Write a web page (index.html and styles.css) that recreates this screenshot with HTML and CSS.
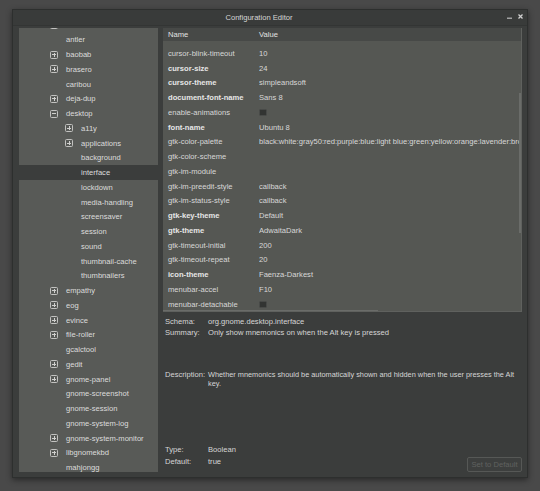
FILE: index.html
```html
<!DOCTYPE html>
<html lang="en">
<head>
    <meta charset="UTF-8">
    <title>Configuration Editor</title>
    <link rel="stylesheet" href="styles.css">
</head>
<body>
    <div class="window">
        <div class="titlebar">
            <span class="title">Configuration Editor</span>
            <div class="wm-buttons">
                <svg class="wm-min" width="5" height="5" viewBox="0 0 5 5"><path d="M0 4.2H5" stroke="#bdbdbd" stroke-width="1.2"/></svg>
                <svg class="wm-close" width="5" height="5" viewBox="0 0 5 5"><path d="M0.5 0.5L4.5 4.5M4.5 0.5L0.5 4.5" stroke="#d0d0d0" stroke-width="1.3"/></svg>
            </div>
        </div>

        <div class="content">
            <!-- arbre des schemas -->
            <div class="tree">
                <ul class="tree-list">
                    <li class="node lvl1 partial"><span class="exp plus"></span><span class="label"></span></li>
                    <li class="node lvl1"><span class="exp none"></span><span class="label">antler</span></li>
                    <li class="node lvl1"><span class="exp plus"></span><span class="label">baobab</span></li>
                    <li class="node lvl1"><span class="exp plus"></span><span class="label">brasero</span></li>
                    <li class="node lvl1"><span class="exp none"></span><span class="label">caribou</span></li>
                    <li class="node lvl1"><span class="exp plus"></span><span class="label">deja-dup</span></li>
                    <li class="node lvl1"><span class="exp minus"></span><span class="label">desktop</span></li>
                    <li class="node lvl2"><span class="exp plus"></span><span class="label">a11y</span></li>
                    <li class="node lvl2"><span class="exp plus"></span><span class="label">applications</span></li>
                    <li class="node lvl2"><span class="exp none"></span><span class="label">background</span></li>
                    <li class="node lvl2 selected"><span class="exp none"></span><span class="label">interface</span></li>
                    <li class="node lvl2"><span class="exp none"></span><span class="label">lockdown</span></li>
                    <li class="node lvl2"><span class="exp none"></span><span class="label">media-handling</span></li>
                    <li class="node lvl2"><span class="exp none"></span><span class="label">screensaver</span></li>
                    <li class="node lvl2"><span class="exp none"></span><span class="label">session</span></li>
                    <li class="node lvl2"><span class="exp none"></span><span class="label">sound</span></li>
                    <li class="node lvl2"><span class="exp none"></span><span class="label">thumbnail-cache</span></li>
                    <li class="node lvl2"><span class="exp none"></span><span class="label">thumbnailers</span></li>
                    <li class="node lvl1"><span class="exp plus"></span><span class="label">empathy</span></li>
                    <li class="node lvl1"><span class="exp plus"></span><span class="label">eog</span></li>
                    <li class="node lvl1"><span class="exp plus"></span><span class="label">evince</span></li>
                    <li class="node lvl1"><span class="exp plus"></span><span class="label">file-roller</span></li>
                    <li class="node lvl1"><span class="exp none"></span><span class="label">gcalctool</span></li>
                    <li class="node lvl1"><span class="exp plus"></span><span class="label">gedit</span></li>
                    <li class="node lvl1"><span class="exp plus"></span><span class="label">gnome-panel</span></li>
                    <li class="node lvl1"><span class="exp none"></span><span class="label">gnome-screenshot</span></li>
                    <li class="node lvl1"><span class="exp none"></span><span class="label">gnome-session</span></li>
                    <li class="node lvl1"><span class="exp none"></span><span class="label">gnome-system-log</span></li>
                    <li class="node lvl1"><span class="exp plus"></span><span class="label">gnome-system-monitor</span></li>
                    <li class="node lvl1"><span class="exp plus"></span><span class="label">libgnomekbd</span></li>
                    <li class="node lvl1"><span class="exp none"></span><span class="label">mahjongg</span></li>
                </ul>
            </div>

            <div class="main">
                <!-- liste des cles -->
                <div class="keys">
                    <div class="keys-head"><span>Name</span><span>Value</span></div>
                    <div class="keys-body">
                        <div class="key"><span class="name">cursor-blink-timeout</span><span class="value">10</span></div>
                        <div class="key set"><span class="name">cursor-size</span><span class="value">24</span></div>
                        <div class="key set"><span class="name">cursor-theme</span><span class="value">simpleandsoft</span></div>
                        <div class="key set"><span class="name">document-font-name</span><span class="value">Sans 8</span></div>
                        <div class="key"><span class="name">enable-animations</span><span class="value"><span class="check"></span></span></div>
                        <div class="key set"><span class="name">font-name</span><span class="value">Ubuntu 8</span></div>
                        <div class="key"><span class="name">gtk-color-palette</span><span class="value">black:white:gray50:red:purple:blue:light blue:green:yellow:orange:lavender:brown:goldenrod4:dodger blue:pink:light green:gray10:gray30:gray75:gray90</span></div>
                        <div class="key"><span class="name">gtk-color-scheme</span><span class="value"></span></div>
                        <div class="key"><span class="name">gtk-im-module</span><span class="value"></span></div>
                        <div class="key"><span class="name">gtk-im-preedit-style</span><span class="value">callback</span></div>
                        <div class="key"><span class="name">gtk-im-status-style</span><span class="value">callback</span></div>
                        <div class="key set"><span class="name">gtk-key-theme</span><span class="value">Default</span></div>
                        <div class="key set"><span class="name">gtk-theme</span><span class="value">AdwaitaDark</span></div>
                        <div class="key"><span class="name">gtk-timeout-initial</span><span class="value">200</span></div>
                        <div class="key"><span class="name">gtk-timeout-repeat</span><span class="value">20</span></div>
                        <div class="key set"><span class="name">icon-theme</span><span class="value">Faenza-Darkest</span></div>
                        <div class="key"><span class="name">menubar-accel</span><span class="value">F10</span></div>
                        <div class="key"><span class="name">menubar-detachable</span><span class="value"><span class="check"></span></span></div>
                    </div>
                    <div class="vscroll"></div>
                    <div class="hscroll"></div>
                </div>

                <!-- details de la cle -->
                <div class="details">
                    <div class="info">
                        <span class="lbl">Schema:</span><span>org.gnome.desktop.interface</span>
                        <span class="lbl">Summary:</span><span>Only show mnemonics on when the Alt key is pressed</span>
                    </div>
                    <div class="info desc">
                        <span class="lbl">Description:</span><span class="desc-text">Whether mnemonics should be automatically shown and hidden when the user presses the Alt key.</span>
                    </div>
                    <div class="bottom">
                        <div class="info type">
                            <span class="lbl">Type:</span><span>Boolean</span>
                            <span class="lbl">Default:</span><span>true</span>
                        </div>
                        <button class="reset" disabled>Set to Default</button>
                    </div>
                </div>
            </div>
        </div>
    </div>
</body>
</html>
```

FILE: styles.css
```css
body {
    margin: 0;
    padding: 9px 12px;
    background: #494949;
    font-family: "Liberation Sans", Arial, sans-serif;
    font-size: 7.6px;
    color: #dcdcdc;
}
.window {
    width: 516px;
    height: 469px;
    box-sizing: border-box;
    border: 1px solid #2d2f2e;
    background: #3b3d3c;
    display: flex;
    flex-direction: column;
    box-shadow: 0 2px 6px rgba(0,0,0,0.45);
}
.titlebar {
    height: 16px;
    box-sizing: border-box;
    display: flex;
    align-items: center;
    background: #393b3a;
    border-bottom: 1px solid #333534;
}
.title {
    flex: 1;
    text-align: center;
    color: #d6d6d6;
}
.wm-buttons {
    width: 22px;
    box-sizing: border-box;
    padding: 0 4px 0 2px;
    display: flex;
    gap: 6px;
    align-items: center;
    margin-bottom: 3px;
}
.wm-buttons svg {
    display: block;
}
.content {
    flex: 1;
    display: flex;
    gap: 5px;
    padding: 2px 5px 5px 6px;
    min-height: 0;
}

/* arbre */
.tree {
    width: 139px;
    background: #585a57;
    overflow: hidden;
}
.tree-list {
    list-style: none;
    margin: -10.15px 0 0 0;
    padding: 0;
}
.node {
    height: 14.75px;
    display: flex;
    align-items: center;
    white-space: nowrap;
}
.node.lvl1 {
    padding-left: 31px;
}
.node.lvl2 {
    padding-left: 46px;
}
.node.selected {
    background: #3b3d3c;
}
.exp {
    width: 8px;
    height: 8px;
    box-sizing: border-box;
    border: 1px solid #c2c2c0;
    border-radius: 1.5px;
    margin-right: 8px;
    position: relative;
    flex-shrink: 0;
}
.exp.none {
    visibility: hidden;
}
.exp::before {
    content: "";
    position: absolute;
    left: 1px;
    top: 2.5px;
    width: 4px;
    height: 1px;
    background: #d0d0ce;
}
.exp.plus::after {
    content: "";
    position: absolute;
    left: 2.5px;
    top: 1px;
    width: 1px;
    height: 4px;
    background: #d0d0ce;
}

/* liste des cles */
.main {
    flex: 1;
    display: flex;
    flex-direction: column;
    min-width: 0;
}
.keys {
    height: 284px;
    background: #555753;
    position: relative;
    overflow: hidden;
    box-sizing: border-box;
    border-right: 1px solid #5f615e;
    border-bottom: 1px solid #5f615e;
}
.keys-head {
    height: 13px;
    display: grid;
    grid-template-columns: 91px 1fr;
    align-items: center;
    padding-left: 5px;
    background: #474947;
    color: #e2e2e2;
}
.keys-body {
    padding-top: 5px;
}
.key {
    height: 14.75px;
    display: grid;
    grid-template-columns: 91px 1fr;
    align-items: center;
    padding-left: 5px;
    white-space: nowrap;
    color: #d8d8d8;
}
.key.set .name {
    font-weight: bold;
    color: #e6e6e6;
}
.value {
    overflow: hidden;
}
.check {
    display: block;
    width: 8px;
    height: 7px;
    border-radius: 1.5px;
    background: #323432;
    border: 1px solid #484a48;
    box-sizing: border-box;
}
.vscroll {
    position: absolute;
    right: 0;
    top: 65px;
    width: 2px;
    height: 140px;
    background: #6a6c69;
}
.hscroll {
    position: absolute;
    left: 0;
    bottom: 0;
    width: 215px;
    height: 1px;
    background: #6a6c69;
}

/* details */
.details {
    flex: 1;
    display: flex;
    flex-direction: column;
    padding: 4px 0 0 2px;
    color: #d6d6d6;
}
.info {
    display: grid;
    grid-template-columns: 43px 1fr;
    line-height: 11px;
}
.info.desc {
    margin-top: 33px;
    line-height: 8.5px;
}
.desc-text {
    max-width: 314px;
    font-size: 7.35px;
}
.bottom {
    margin-top: auto;
    display: flex;
    justify-content: space-between;
    align-items: flex-end;
}
.info.type {
    line-height: 12px;
    margin-bottom: 4px;
}
.reset {
    width: 55px;
    height: 15px;
    padding: 0;
    font-family: inherit;
    font-size: 7.6px;
    color: #606260;
    background: #3d3f3e;
    border: 1px solid #565856;
    border-radius: 2px;
}
```
